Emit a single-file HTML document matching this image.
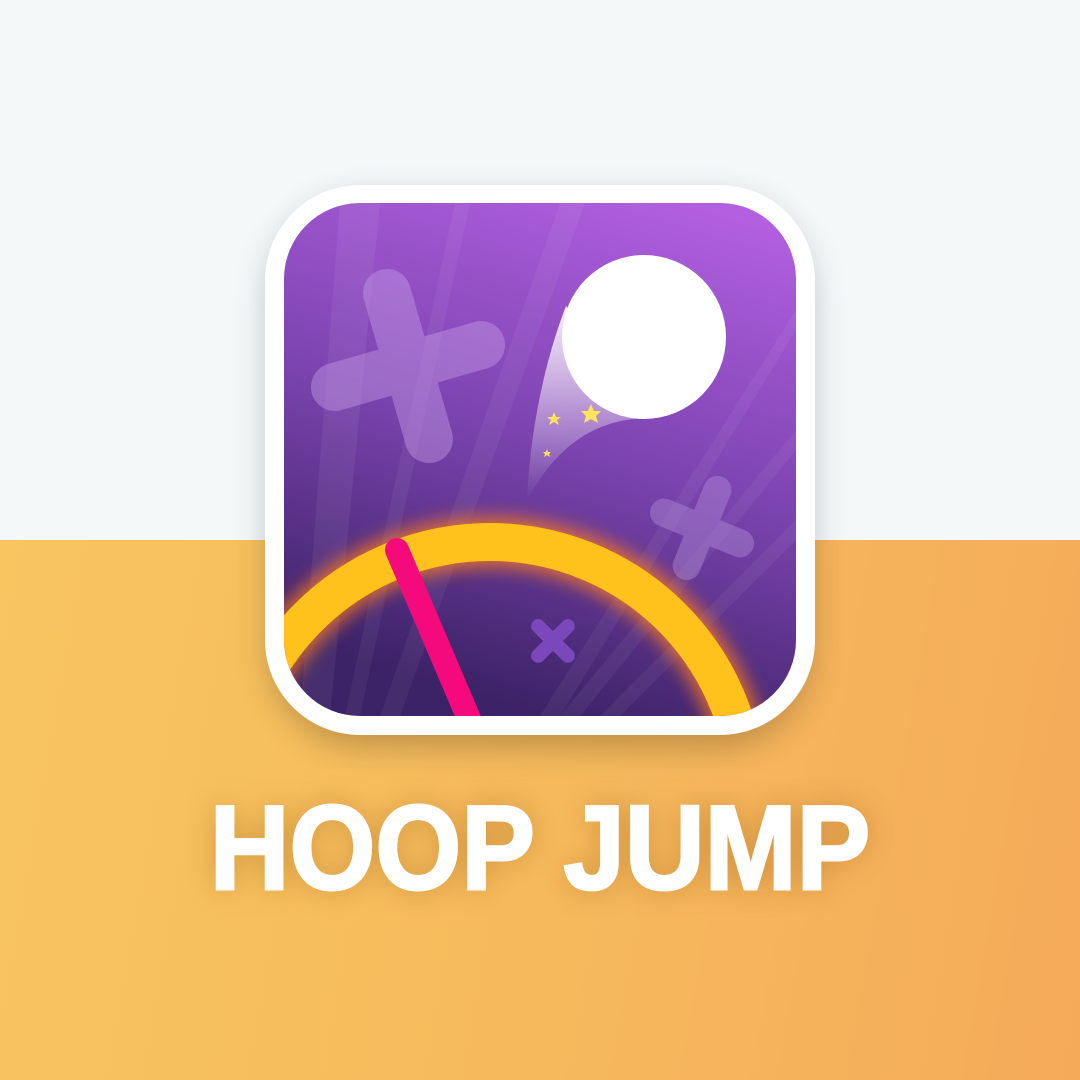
<!DOCTYPE html>
<html><head><meta charset="utf-8"><style>
html,body{margin:0;padding:0;width:1080px;height:1080px;overflow:hidden;}
body{position:relative;background:#f4f8f9;}
.bot{position:absolute;left:0;top:540px;width:1080px;height:540px;background:linear-gradient(100deg,#f8c55f 0%,#f6b95c 55%,#f5aa5a 100%);}
svg{position:absolute;left:0;top:0;}
.title{position:absolute;left:0;top:778px;width:1080px;text-align:center;font-family:"Liberation Sans",sans-serif;font-weight:bold;font-size:120px;color:#fff;-webkit-text-stroke:3px #fff;line-height:140px;transform:scaleX(0.92);transform-origin:540px 0;text-shadow:0 0 30px rgba(150,90,20,0.45);}
</style></head><body>
<div class="bot"></div>
<svg width="1080" height="1080" viewBox="0 0 1080 1080">
<defs>
<linearGradient id="bg" x1="0.8" y1="0" x2="0.5" y2="1">
<stop offset="0" stop-color="#b25fe0"/><stop offset="0.5" stop-color="#7c44b0"/><stop offset="1" stop-color="#3c2266"/>
</linearGradient>
<linearGradient id="trail" x1="0" y1="0" x2="0" y2="1">
<stop offset="0" stop-color="#fff" stop-opacity="1"/><stop offset="1" stop-color="#fff" stop-opacity="0"/>
</linearGradient>
<filter id="sh" x="-30%" y="-30%" width="160%" height="160%"><feGaussianBlur stdDeviation="18"/></filter>
<filter id="glow" x="-30%" y="-30%" width="160%" height="160%"><feGaussianBlur stdDeviation="9"/></filter>
<clipPath id="ic"><rect x="284" y="203" width="512" height="513" rx="76"/></clipPath>
</defs>
<rect x="270" y="200" width="540" height="545" rx="95" fill="#000" opacity="0.25" filter="url(#sh)"/>
<rect x="265" y="185" width="550" height="550" rx="95" fill="#fff"/>
<g clip-path="url(#ic)">
<rect x="284" y="203" width="512" height="513" fill="url(#bg)"/>
<polygon points="340,203 380,203 330,716 300,716" fill="#fff" opacity="0.06"/>
<polygon points="455,203 470,203 360,716 345,716" fill="#fff" opacity="0.05"/>
<polygon points="560,203 585,203 400,716 380,716" fill="#fff" opacity="0.05"/>
<polygon points="796,310 796,330 560,716 540,716" fill="#fff" opacity="0.05"/>
<polygon points="796,430 796,450 580,716 560,716" fill="#fff" opacity="0.05"/>
<polygon points="796,520 796,540 620,716 600,716" fill="#fff" opacity="0.05"/>
<g transform="translate(408,366) rotate(-16)" fill="#c9a0e8" opacity="0.42">
<rect x="-24" y="-100" width="48" height="200" rx="24"/>
<rect x="-100" y="-24" width="200" height="48" rx="24"/>
</g>
<g transform="translate(702,528) rotate(22)" fill="#b894dc" opacity="0.4">
<rect x="-14" y="-55" width="28" height="110" rx="14"/>
<rect x="-55" y="-14" width="110" height="28" rx="14"/>
</g>
<g transform="translate(553,641) rotate(45)" fill="#7b48bc">
<rect x="-7" y="-28" width="14" height="56" rx="7"/>
<rect x="-28" y="-7" width="56" height="14" rx="7"/>
</g>
<path d="M566,306 C545,360 530,430 527,500 C560,440 600,420 645,418 Z" fill="url(#trail)" opacity="0.9"/>
<circle cx="644" cy="337" r="82" fill="#fff"/>
<g fill="#ffe35a">
<polygon points="591,404 594,411 601,411 596,416 598,423 591,419 584,423 586,416 581,411 588,411"/>
<polygon points="554,412 556,417 561,417 557,420 559,425 554,422 549,425 551,420 547,417 552,417"/>
<polygon points="547,449 548,452 551,452 549,454 550,457 547,455 544,457 545,454 543,452 546,452"/>
</g>
<circle cx="490" cy="799" r="257" fill="none" stroke="#ff7a1a" stroke-width="50" opacity="0.8" filter="url(#glow)"/>
<circle cx="490" cy="799" r="257" fill="none" stroke="#ffc21c" stroke-width="38"/>
<line x1="397" y1="550" x2="478" y2="740" stroke="#f50a7e" stroke-width="24" stroke-linecap="round"/>
</g>
</svg>
<div class="title">HOOP JUMP</div>
</body></html>
